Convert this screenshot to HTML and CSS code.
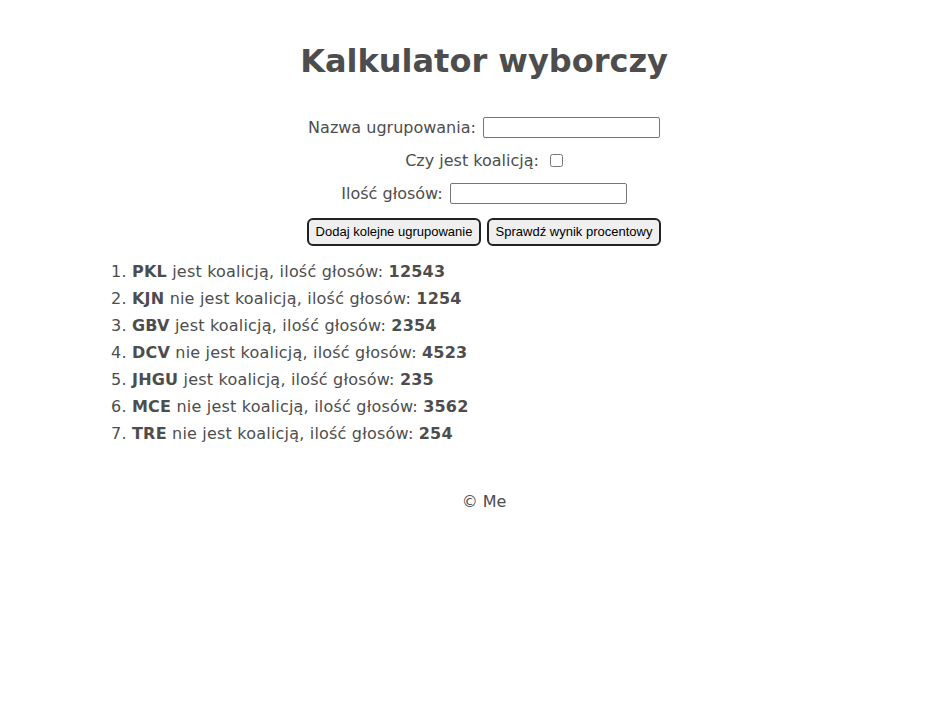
FILE: index.html
```html
<!DOCTYPE html>
<html lang="pl">
<head>
<meta charset="utf-8">
<title>Kalkulator wyborczy</title>
<link rel="stylesheet" href="styles.css">
</head>
<body>
<div class="page">
  <h1 class="title">Kalkulator wyborczy</h1>
  <form class="form">
    <div class="row">
      <label for="nazwa">Nazwa ugrupowania:</label>
      <input class="field" id="nazwa" type="text">
    </div>
    <div class="row">
      <label for="koal">Czy jest koalicją:</label>
      <input class="check" id="koal" type="checkbox">
    </div>
    <div class="row">
      <label for="glosy">Ilość głosów:</label>
      <input class="field" id="glosy" type="text">
    </div>
    <div class="row buttons">
      <button type="button" class="btn">Dodaj kolejne ugrupowanie</button>
      <button type="button" class="btn">Sprawdź wynik procentowy</button>
    </div>
  </form>
  <ol class="list">
    <li><b>PKL</b> jest koalicją, ilość głosów: <b>12543</b></li>
    <li><b>KJN</b> nie jest koalicją, ilość głosów: <b>1254</b></li>
    <li><b>GBV</b> jest koalicją, ilość głosów: <b>2354</b></li>
    <li><b>DCV</b> nie jest koalicją, ilość głosów: <b>4523</b></li>
    <li><b>JHGU</b> jest koalicją, ilość głosów: <b>235</b></li>
    <li><b>MCE</b> nie jest koalicją, ilość głosów: <b>3562</b></li>
    <li><b>TRE</b> nie jest koalicją, ilość głosów: <b>254</b></li>
  </ol>
  <footer class="footer">© Me</footer>
</div>
</body>
</html>
```
FILE: styles.css
```css
html, body {
  margin: 0;
  padding: 0;
  background: #fff;
}
body {
  font-family: "DejaVu Sans", Verdana, sans-serif;
  font-size: 16px;
  color: #4d4d4d;
}
.page {
  padding-left: 40px;
  padding-top: 1px;
}
.title {
  text-align: center;
  font-size: 32px;
  font-weight: bold;
  margin: 38px 0 0;
  line-height: 44px;
}
.form {
  margin-top: 34px;
  display: flex;
  flex-direction: column;
  align-items: center;
  gap: 12px;
}
.row {
  display: flex;
  align-items: center;
  gap: 7px;
  height: 21px;
}
.field {
  width: 177px;
  height: 21px;
  box-sizing: border-box;
  border: 1px solid #767676;
  border-radius: 2px;
  padding: 1px 2px;
  margin: 0;
}
.check {
  width: 13px;
  height: 13px;
  margin: 0 0 0 4px;
}
.buttons {
  height: 27px;
  margin-top: 2px;
  gap: 6px;
}
.btn {
  font-family: "Liberation Sans", Arial, sans-serif;
  font-size: 13px;
  color: #000;
  background: #efefef;
  border: 2px solid #222;
  border-radius: 6px;
  height: 28px;
  width: 174px;
  padding: 0;
  margin: 0;
}
.list {
  margin: 13px 0 0 52px;
  padding-left: 40px;
  line-height: 27px;
  letter-spacing: 0.2px;
}
.footer {
  text-align: center;
  margin-top: 45px;
}
```
